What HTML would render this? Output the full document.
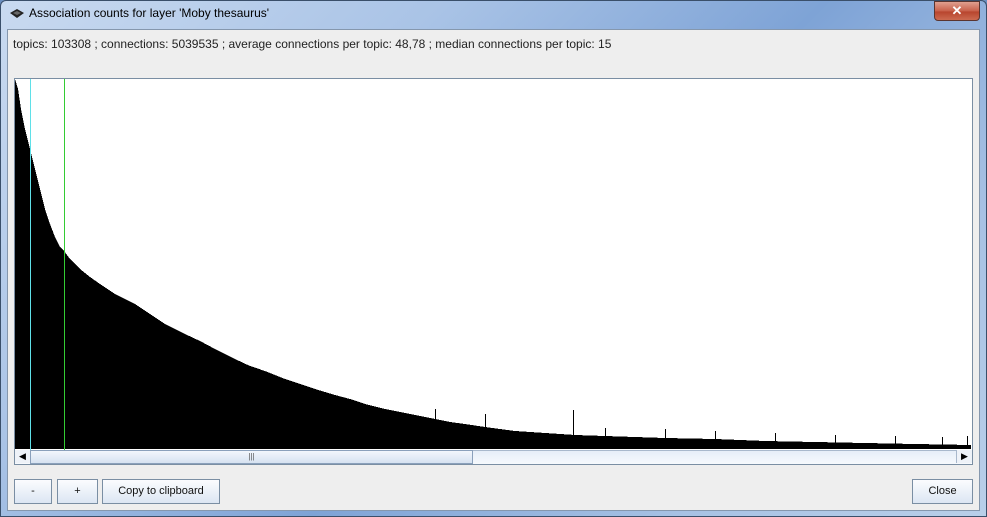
<!DOCTYPE html>
<html><head><style>
body{margin:0;width:987px;height:517px;overflow:hidden;background:#6b8fc0;font-family:"Liberation Sans",sans-serif;font-size:12px;position:relative}
.frame{position:absolute;left:0;top:0;width:985px;height:515px;border:1px solid #3a4f6a;border-radius:6px 6px 0 0;background:linear-gradient(135deg,#c9daf0 0%,#a9c3e6 30%,#7ea3d6 55%,#a8c2e4 80%,#b9cfe9 100%)}
.title{position:absolute;left:29px;top:6px;font-size:12px;color:#000}
.client{position:absolute;left:7px;top:29px;width:971px;height:480px;background:#eeeeee;border:1px solid #8597ad}
.close{position:absolute;left:934px;top:1px;width:44px;height:18px;border:1px solid #5a3530;border-radius:0 0 4px 4px;background:linear-gradient(#e0a090,#c8604a 50%,#b8452e 55%,#cc6a50);color:#fff;font-weight:bold;text-align:center;font-size:13px;line-height:18px}
.btn{position:absolute;top:479px;height:23px;border:1px solid #7a8ea3;background:linear-gradient(#fbfcfe,#dce6f3);font-size:11px;text-align:center;line-height:23px;color:#111}
</style></head><body>
<div class="frame"></div>
<svg style="position:absolute;left:9px;top:8px" width="16" height="12" viewBox="0 0 16 12"><path d="M1 5 L8 1 L15 5 L8 10 Z" fill="#222"/><path d="M4 5 L8 3 L12 5 L8 7Z" fill="#666"/></svg>
<div class="title">Association counts for layer 'Moby thesaurus'</div>
<div class="close">✕</div>
<div class="client"></div>
<div style="position:absolute;left:13px;top:37px;font-size:12px;color:#222">topics: 103308 ; connections: 5039535 ; average connections per topic: 48,78 ; median connections per topic: 15</div>
<div style="position:absolute;left:14px;top:78px;width:957px;height:385px;border:1px solid #7a8ea3;background:#fff"></div>
<svg style="position:absolute;left:15px;top:79px" width="956" height="371" viewBox="0 0 956 371" shape-rendering="crispEdges">
<polygon fill="#000" points="0,370 0,0 3,10 6,30 10,50 15,70 20,90 25,110 30,130 35,145 40,158 45,168 49,172 55,180 65,190 75,198 85,205 100,215 120,225 135,235 150,245 170,255 185,262 200,270 220,280 235,287 250,292 270,300 285,305 300,310 320,316 335,320 350,325 370,330 385,333 400,336 420,340 435,343 450,345 470,348 485,350 500,352 530,354 560,356 590,357 620,358 650,359 700,360 750,362 800,363 850,364 900,365 956,366 956,370"/>
<g stroke="#000" stroke-width="1">
<line x1="420.5" y1="370" x2="420.5" y2="330"/><line x1="470.5" y1="370" x2="470.5" y2="335"/><line x1="558.5" y1="370" x2="558.5" y2="331"/><line x1="590.5" y1="370" x2="590.5" y2="349"/><line x1="650.5" y1="370" x2="650.5" y2="350"/><line x1="700.5" y1="370" x2="700.5" y2="352"/><line x1="760.5" y1="370" x2="760.5" y2="354"/><line x1="820.5" y1="370" x2="820.5" y2="356"/><line x1="880.5" y1="370" x2="880.5" y2="357"/><line x1="927.5" y1="370" x2="927.5" y2="358"/><line x1="952.5" y1="370" x2="952.5" y2="357"/></g>
<line x1="15.5" y1="0" x2="15.5" y2="371" stroke="#5fe0e8"/>
<line x1="49.5" y1="0" x2="49.5" y2="371" stroke="#33cc33"/>
</svg>
<div style="position:absolute;left:15px;top:450px;width:956px;height:13px;background:linear-gradient(#e6eef8,#f6f9fd);border-top:1px solid #a8b8cc"></div>
<div style="position:absolute;left:15px;top:450px;width:15px;height:13px;background:#eef2f8;border-right:1px solid #a8b8cc;font-size:9px;line-height:13px;text-align:center">◀</div>
<div style="position:absolute;left:30px;top:450px;width:441px;height:12px;background:linear-gradient(#f2f6fc,#d6e2f1);border:1px solid #8aa0bb;font-size:8px;line-height:12px;text-align:center;color:#555">|||</div>
<div style="position:absolute;left:956px;top:450px;width:15px;height:13px;background:#eef2f8;border-left:1px solid #a8b8cc;font-size:9px;line-height:13px;text-align:center">▶</div>
<div class="btn" style="left:14px;width:36px">-</div>
<div class="btn" style="left:57px;width:39px">+</div>
<div class="btn" style="left:102px;width:116px">Copy to clipboard</div>
<div class="btn" style="left:912px;width:59px">Close</div>
</body></html>
